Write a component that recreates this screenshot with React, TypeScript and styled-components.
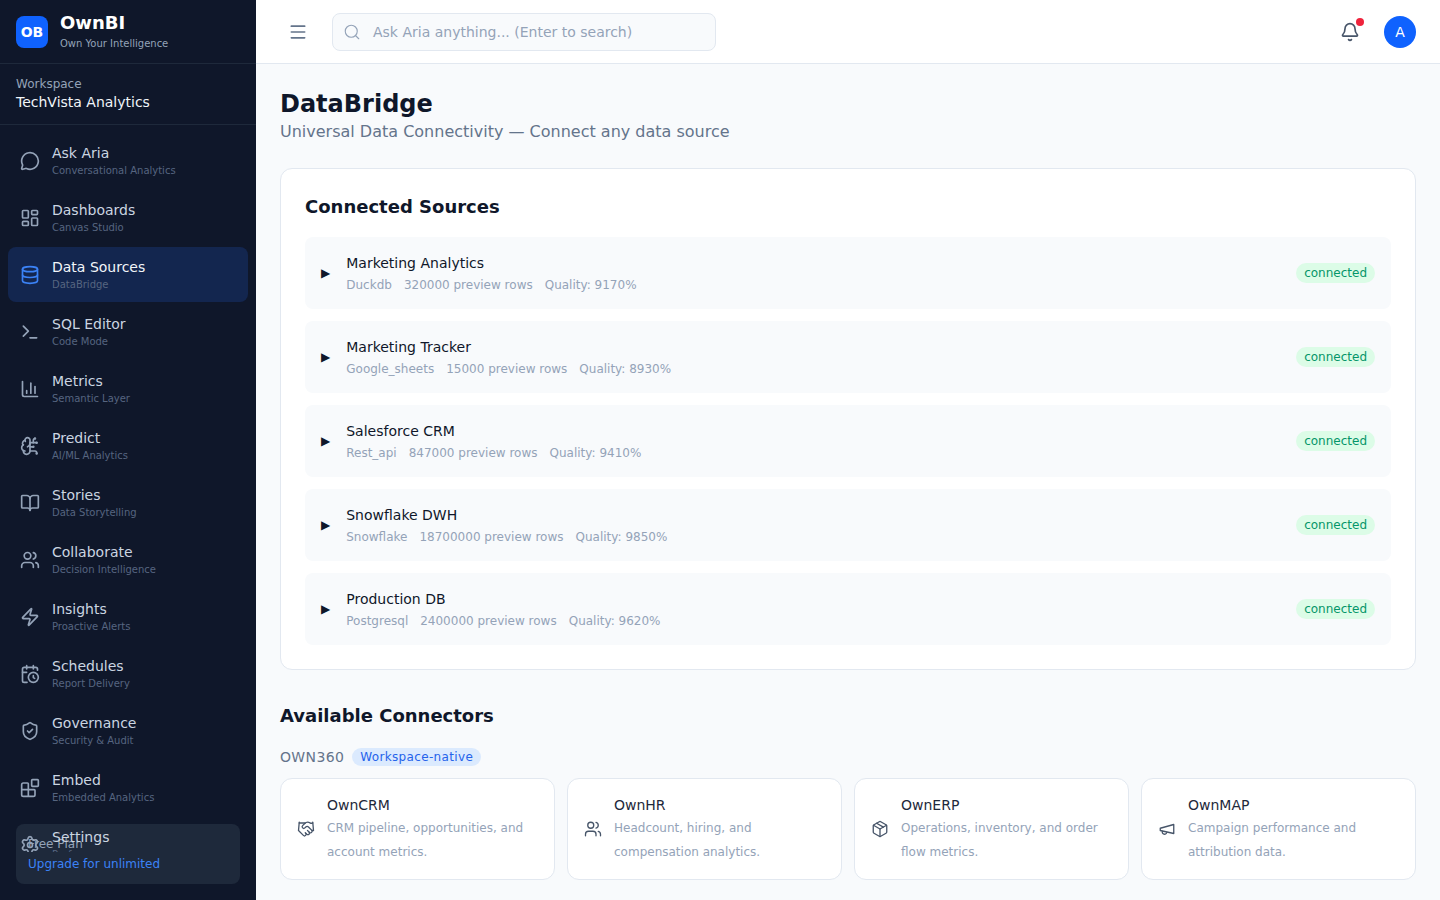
import React from "react";
import styled, { createGlobalStyle } from "styled-components";
import {
  Bell,
  BookOpen,
  Blocks,
  BrainCircuit,
  CalendarClock,
  ChartColumn,
  Database,
  Handshake,
  LayoutDashboard,
  Menu,
  MessageCircle,
  Package,
  Search,
  Settings,
  ShieldCheck,
  Terminal,
  Users,
  Zap,
} from "lucide-react";

const GlobalStyle = createGlobalStyle`
  html, body {
    margin: 0;
    height: 100%;
    overflow: hidden;
    background: #f8fafc;
    font-family: "DejaVu Sans", sans-serif;
  }
  * { box-sizing: border-box; }
`;

// the horn in the reference is the older lucide shape, narrow on the left
const HornIcon = ({ size = 18, strokeWidth = 1.75 }: { size?: number; strokeWidth?: number }) => (
  <svg
    width={size}
    height={size}
    viewBox="0 0 24 24"
    fill="none"
    stroke="currentColor"
    strokeWidth={strokeWidth}
    strokeLinecap="round"
    strokeLinejoin="round"
  >
    <path d="m3 11 18-5v12L3 14v-3z" />
    <path d="M11.6 16.8a3 3 0 1 1-5.8-1.6" />
  </svg>
);

const navItems = [
  { label: "Ask Aria", sub: "Conversational Analytics", icon: MessageCircle },
  { label: "Dashboards", sub: "Canvas Studio", icon: LayoutDashboard },
  { label: "Data Sources", sub: "DataBridge", icon: Database, active: true },
  { label: "SQL Editor", sub: "Code Mode", icon: Terminal },
  { label: "Metrics", sub: "Semantic Layer", icon: ChartColumn },
  { label: "Predict", sub: "AI/ML Analytics", icon: BrainCircuit },
  { label: "Stories", sub: "Data Storytelling", icon: BookOpen },
  { label: "Collaborate", sub: "Decision Intelligence", icon: Users },
  { label: "Insights", sub: "Proactive Alerts", icon: Zap },
  { label: "Schedules", sub: "Report Delivery", icon: CalendarClock },
  { label: "Governance", sub: "Security & Audit", icon: ShieldCheck },
  { label: "Embed", sub: "Embedded Analytics", icon: Blocks },
  { label: "Settings", sub: "Preferences", icon: Settings },
];

const sources = [
  { name: "Marketing Analytics", type: "Duckdb", rows: "320000", quality: "9170" },
  { name: "Marketing Tracker", type: "Google_sheets", rows: "15000", quality: "8930" },
  { name: "Salesforce CRM", type: "Rest_api", rows: "847000", quality: "9410" },
  { name: "Snowflake DWH", type: "Snowflake", rows: "18700000", quality: "9850" },
  { name: "Production DB", type: "Postgresql", rows: "2400000", quality: "9620" },
];

const connectors = [
  { name: "OwnCRM", desc: "CRM pipeline, opportunities, and account metrics.", icon: Handshake },
  { name: "OwnHR", desc: "Headcount, hiring, and compensation analytics.", icon: Users },
  { name: "OwnERP", desc: "Operations, inventory, and order flow metrics.", icon: Package },
  { name: "OwnMAP", desc: "Campaign performance and attribution data.", icon: HornIcon },
];

const Shell = styled.div`
  display: flex;
  width: 100%;
  height: 100vh;
  overflow: hidden;
`;

const Sidebar = styled.aside`
  position: relative;
  display: flex;
  flex-direction: column;
  flex: 0 0 256px;
  height: 100%;
  background: #0f172a;
`;

const Brand = styled.div`
  display: flex;
  align-items: center;
  gap: 12px;
  height: 64px;
  padding: 0 16px 3px;
  border-bottom: 1px solid #1e293b;
`;

const LogoMark = styled.div`
  display: flex;
  align-items: center;
  justify-content: center;
  width: 32px;
  height: 32px;
  margin-top: 3px;
  border-radius: 8px;
  background: #0f62fe;
  color: #fff;
  font-size: 14px;
  font-weight: 700;
`;

const BrandName = styled.div`
  color: #fff;
  font-size: 18px;
  font-weight: 700;
  line-height: 27px;
`;

const BrandTag = styled.div`
  color: #94a3b8;
  font-size: 10px;
  line-height: 15px;
`;

const Workspace = styled.div`
  height: 61px;
  padding: 12px 16px;
  border-bottom: 1px solid #1e293b;
`;

const WorkspaceLabel = styled.div`
  color: #94a3b8;
  font-size: 12px;
  line-height: 16px;
`;

const WorkspaceName = styled.div`
  color: #f1f5f9;
  font-size: 14px;
  line-height: 20px;
`;

const Nav = styled.nav`
  position: relative;
  flex: 1;
  display: flex;
  flex-direction: column;
  gap: 2px;
  min-height: 0;
  margin-bottom: 48px;
  padding: 8px 8px 0;
  overflow: hidden;
`;

const NavItem = styled.a<{ $active?: boolean }>`
  display: flex;
  flex: 0 0 55px;
  align-items: center;
  gap: 12px;
  padding: 0 12px;
  border-radius: 8px;
  background: ${(p) => (p.$active ? "#13264f" : "transparent")};
  color: ${(p) => (p.$active ? "#3b82f6" : "#94a3b8")};
`;

const NavText = styled.div`
  display: flex;
  flex-direction: column;
`;

const NavLabel = styled.span<{ $active?: boolean }>`
  color: ${(p) => (p.$active ? "#f1f5f9" : "#cbd5e1")};
  font-size: 14px;
  line-height: 20px;
`;

const NavSub = styled.span`
  color: #566580;
  font-size: 10px;
  line-height: 15px;
`;

const PlanBox = styled.div`
  position: absolute;
  left: 16px;
  right: 16px;
  bottom: 16px;
  height: 60px;
  padding: 12px;
  border-radius: 8px;
  background: #1e293b;
`;

const PlanName = styled.div`
  color: #94a3b8;
  font-size: 12px;
  line-height: 16px;
`;

const PlanLink = styled.div`
  margin-top: 4px;
  color: #3b82f6;
  font-size: 12px;
  line-height: 16px;
`;

const Main = styled.div`
  flex: 1;
  display: flex;
  flex-direction: column;
  min-width: 0;
`;

const Topbar = styled.header`
  display: flex;
  flex: 0 0 64px;
  align-items: center;
  padding: 0 24px;
  background: #fff;
  border-bottom: 1px solid #e2e8f0;
  color: #64748b;
`;

const MenuButton = styled.button`
  display: flex;
  padding: 8px;
  margin-right: 16px;
  border: 0;
  background: none;
  color: #64748b;
`;

const SearchBox = styled.div`
  display: flex;
  align-items: center;
  gap: 12px;
  width: 384px;
  height: 38px;
  padding: 0 12px 0 10px;
  border: 1px solid #e2e8f0;
  border-radius: 8px;
  background: #f8fafc;
  color: #94a3b8;
  font-size: 14px;
`;

const TopActions = styled.div`
  display: flex;
  align-items: center;
  gap: 24px;
  margin-left: auto;
`;

const BellWrap = styled.div`
  position: relative;
  display: flex;
  color: #475569;
`;

const BellDot = styled.span`
  position: absolute;
  top: -4px;
  right: -4px;
  width: 8px;
  height: 8px;
  border-radius: 50%;
  background: #ef233c;
`;

const Avatar = styled.div`
  display: flex;
  align-items: center;
  justify-content: center;
  width: 32px;
  height: 32px;
  border-radius: 50%;
  background: #0f62fe;
  color: #fff;
  font-size: 14px;
`;

const Content = styled.main`
  flex: 1;
  padding: 24px;
  overflow: hidden;
`;

const PageTitle = styled.h1`
  margin: 0;
  color: #0f172a;
  font-size: 24px;
  font-weight: 700;
  line-height: 32px;
`;

const PageSub = styled.p`
  margin: 0 0 24px;
  color: #64748b;
  font-size: 16px;
  line-height: 24px;
`;

const Card = styled.section`
  padding: 24px;
  background: #fff;
  border: 1px solid #e2e8f0;
  border-radius: 12px;
`;

const SectionTitle = styled.h2`
  margin: 0 0 16px;
  color: #0f172a;
  font-size: 18px;
  font-weight: 700;
  line-height: 28px;
`;

const SourceList = styled.div`
  display: flex;
  flex-direction: column;
  gap: 12px;
`;

const SourceRow = styled.div`
  display: flex;
  align-items: center;
  height: 72px;
  padding: 0 16px;
  border-radius: 8px;
  background: #f8fafc;
`;

const Caret = styled.span`
  margin-right: 16px;
  color: #0f172a;
  font-size: 12px;
`;

const SourceInfo = styled.div`
  flex: 1;
`;

const SourceName = styled.div`
  margin-bottom: 4px;
  color: #0f172a;
  font-size: 14px;
  line-height: 20px;
`;

const SourceMeta = styled.div`
  display: flex;
  gap: 12px;
  color: #94a3b8;
  font-size: 12px;
  line-height: 16px;
`;

const StatusBadge = styled.span`
  padding: 2px 8px;
  border-radius: 999px;
  background: #dcfce7;
  color: #059669;
  font-size: 12px;
  line-height: 16px;
`;

const ConnectorsTitle = styled(SectionTitle)`
  margin: 32px 0 18px;
`;

const GroupHeader = styled.div`
  display: flex;
  align-items: center;
  gap: 8px;
  margin-bottom: 12px;
  color: #64748b;
  font-size: 14px;
  letter-spacing: 0.35px;
`;

const GroupBadge = styled.span`
  padding: 1px 8px;
  border-radius: 999px;
  background: #dbeafe;
  color: #2563eb;
  font-size: 12px;
  line-height: 16px;
`;

const ConnectorGrid = styled.div`
  display: grid;
  grid-template-columns: repeat(4, 1fr);
  gap: 12px;
`;

const ConnectorCard = styled.div`
  display: flex;
  align-items: center;
  gap: 12px;
  height: 102px;
  padding: 0 16px;
  background: #fff;
  border: 1px solid #e2e8f0;
  border-radius: 12px;
  color: #475569;

  svg {
    flex-shrink: 0;
  }
`;

const ConnectorName = styled.div`
  margin-bottom: 1px;
  color: #1e293b;
  font-size: 14px;
  line-height: 20px;
`;

const ConnectorDesc = styled.div`
  color: #94a3b8;
  font-size: 12px;
  line-height: 24px;
`;

const App = () => {
  return (
    <Shell>
      <GlobalStyle />
      <Sidebar>
        <Brand>
          <LogoMark>OB</LogoMark>
          <div>
            <BrandName>OwnBI</BrandName>
            <BrandTag>Own Your Intelligence</BrandTag>
          </div>
        </Brand>
        <Workspace>
          <WorkspaceLabel>Workspace</WorkspaceLabel>
          <WorkspaceName>TechVista Analytics</WorkspaceName>
        </Workspace>
        <PlanBox>
          <PlanName>Free Plan</PlanName>
          <PlanLink>Upgrade for unlimited</PlanLink>
        </PlanBox>
        <Nav>
          {navItems.map(({ label, sub, icon: Icon, active }) => (
            <NavItem key={label} $active={active}>
              <Icon size={20} strokeWidth={2} />
              <NavText>
                <NavLabel $active={active}>{label}</NavLabel>
                <NavSub>{sub}</NavSub>
              </NavText>
            </NavItem>
          ))}
        </Nav>
      </Sidebar>
      <Main>
        <Topbar>
          <MenuButton>
            <Menu size={20} strokeWidth={2} />
          </MenuButton>
          <SearchBox>
            <Search size={18} strokeWidth={1.5} />
            <span>Ask Aria anything... (Enter to search)</span>
          </SearchBox>
          <TopActions>
            <BellWrap>
              <Bell size={20} strokeWidth={2} />
              <BellDot />
            </BellWrap>
            <Avatar>A</Avatar>
          </TopActions>
        </Topbar>
        <Content>
          <PageTitle>DataBridge</PageTitle>
          <PageSub>Universal Data Connectivity — Connect any data source</PageSub>
          <Card>
            <SectionTitle>Connected Sources</SectionTitle>
            <SourceList>
              {sources.map((s) => (
                <SourceRow key={s.name}>
                  <Caret>▶</Caret>
                  <SourceInfo>
                    <SourceName>{s.name}</SourceName>
                    <SourceMeta>
                      <span>{s.type}</span>
                      <span>{s.rows} preview rows</span>
                      <span>Quality: {s.quality}%</span>
                    </SourceMeta>
                  </SourceInfo>
                  <StatusBadge>connected</StatusBadge>
                </SourceRow>
              ))}
            </SourceList>
          </Card>
          <ConnectorsTitle>Available Connectors</ConnectorsTitle>
          <GroupHeader>
            OWN360
            <GroupBadge>Workspace-native</GroupBadge>
          </GroupHeader>
          <ConnectorGrid>
            {connectors.map(({ name, desc, icon: Icon }) => (
              <ConnectorCard key={name}>
                <Icon size={18} strokeWidth={1.75} />
                <div>
                  <ConnectorName>{name}</ConnectorName>
                  <ConnectorDesc>{desc}</ConnectorDesc>
                </div>
              </ConnectorCard>
            ))}
          </ConnectorGrid>
        </Content>
      </Main>
    </Shell>
  );
};

export default App;
